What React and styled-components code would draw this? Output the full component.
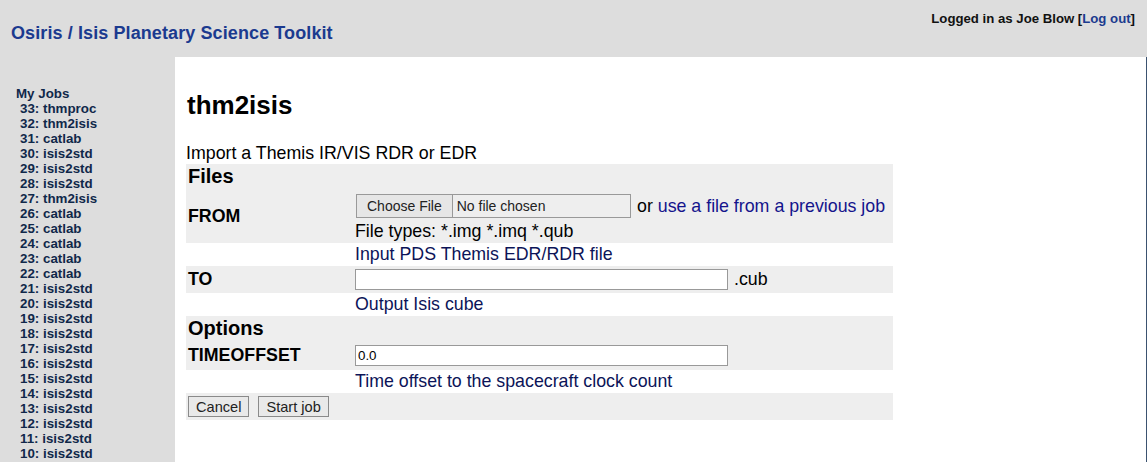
import React from 'react'
import styled, { createGlobalStyle } from 'styled-components'

const GlobalStyle = createGlobalStyle`
    html, body {
        margin: 0;
        padding: 0;
        background: #dddddd;
        font-family: "Liberation Sans", Arial, sans-serif;
    }
`

const Page = styled.div`
    display: flex;
    flex-direction: column;
    min-height: 100vh;
`

const Header = styled.header`
    display: flex;
    justify-content: space-between;
    align-items: flex-start;
    height: 57px;
    background: #dddddd;
    padding: 0 12px 0 11px;
`

const SiteTitle = styled.div`
    margin-top: 23px;
    font-size: 18px;
    font-weight: bold;
    letter-spacing: 0.1px;
    color: #1b3a8f;
`

const Login = styled.div`
    margin-top: 11px;
    font-size: 13.2px;
    font-weight: bold;
    color: #111;
`

const HeaderLink = styled.a`
    color: #1b3a8f;
    text-decoration: none;
`

const Body = styled.div`
    flex: 1;
    display: flex;
`

const Sidebar = styled.nav`
    width: 175px;
    flex-shrink: 0;
    padding-top: 29px;
    font-size: 13.33px;
    font-weight: bold;
    line-height: 15px;
    color: #10284a;
`

const SideHeading = styled.div`
    padding-left: 16px;
`

const JobItem = styled.div`
    padding-left: 20px;
`

const Main = styled.main`
    flex: 1;
    background: #ffffff;
    border-right: 1px solid #3b5270;
    padding: 0 11px;
`

const Title = styled.h1`
    margin: 33px 0 22px 1px;
    font-size: 26px;
    font-weight: bold;
    color: #000;
`

const Intro = styled.div`
    font-size: 17.8px;
    color: #000;
`

const Form = styled.div`
    width: 707px;
    font-size: 17.8px;
    color: #000;
`

const Row = styled.div`
    display: grid;
    grid-template-columns: 167px 1fr;
    align-items: center;
    background: ${p => (p.$shaded ? '#eeeeee' : 'transparent')};
    padding: ${p => p.$pad || '1px 2px'};
`

const SectionTitle = styled.div`
    grid-column: 1 / 3;
    font-size: 20px;
    font-weight: bold;
    line-height: 23px;
`

const Label = styled.div`
    font-weight: bold;
`

const Value = styled.div`
    display: flex;
    flex-direction: column;
`

const Line = styled.div`
    display: flex;
    align-items: center;
    gap: 6px;
    height: ${p => p.$height || 'auto'};
`

const Hint = styled.div`
    line-height: 20px;
`

const Desc = styled.div`
    grid-column: 2;
    line-height: 20px;
    color: #0c1458;
`

const JobLink = styled.a`
    color: #14148c;
    text-decoration: none;
`

const FileInput = styled.input`
    width: 275px;
    height: 24px;
    margin-left: 1px;
    box-sizing: border-box;
    border: 1px solid #999;
    padding: 0;
    font-family: "Liberation Sans", Arial, sans-serif;
    font-size: 14px;
    color: #222;
    background: transparent;

    &::file-selector-button {
        height: 22px;
        margin: 0 4px 0 0;
        padding: 0 10px;
        border: none;
        border-right: 1px solid #999;
        background: #e6e6e6;
        font: inherit;
        color: #222;
    }
`

const TextInput = styled.input`
    width: 373px;
    height: 21px;
    box-sizing: border-box;
    border: 1px solid #999;
    padding: 0 2px;
    font-family: "Liberation Sans", Arial, sans-serif;
    font-size: 13.33px;
    color: #000;
    background: #fff;
`

const Buttons = styled.div`
    grid-column: 1 / 3;
    display: flex;
    gap: 9px;
`

const Button = styled.button`
    height: 21px;
    padding: 0 7px;
    border: 1px solid #8a8a8a;
    background: #e9e9e9;
    font-family: "Liberation Sans", Arial, sans-serif;
    font-size: 14.6px;
    color: #222;
`

const jobs = [
    [33, 'thmproc'], [32, 'thm2isis'], [31, 'catlab'], [30, 'isis2std'],
    [29, 'isis2std'], [28, 'isis2std'], [27, 'thm2isis'], [26, 'catlab'],
    [25, 'catlab'], [24, 'catlab'], [23, 'catlab'], [22, 'catlab'],
    [21, 'isis2std'], [20, 'isis2std'], [19, 'isis2std'], [18, 'isis2std'],
    [17, 'isis2std'], [16, 'isis2std'], [15, 'isis2std'], [14, 'isis2std'],
    [13, 'isis2std'], [12, 'isis2std'], [11, 'isis2std'], [10, 'isis2std'],
]

function App() {
    return (
        <Page>
            <GlobalStyle />
            <Header>
                <SiteTitle>Osiris / Isis Planetary Science Toolkit</SiteTitle>
                <Login>
                    Logged in as Joe Blow [<HeaderLink href="#">Log out</HeaderLink>]
                </Login>
            </Header>
            <Body>
                <Sidebar>
                    <SideHeading>My Jobs</SideHeading>
                    {jobs.map(([id, name]) => (
                        <JobItem key={id}>{id}: {name}</JobItem>
                    ))}
                </Sidebar>
                <Main>
                    <Title>thm2isis</Title>
                    <Intro>Import a Themis IR/VIS RDR or EDR</Intro>
                    <Form>
                        <Row $shaded>
                            <SectionTitle>Files</SectionTitle>
                        </Row>
                        <Row $shaded $pad="2px 2px 2px">
                            <Label>FROM</Label>
                            <Value>
                                <Line $height="30px">
                                    <FileInput type="file" />
                                    <span>or <JobLink href="#">use a file from a previous job</JobLink></span>
                                </Line>
                                <Hint>File types: *.img *.imq *.qub</Hint>
                            </Value>
                        </Row>
                        <Row $pad="1px 2px 2px">
                            <Desc>Input PDS Themis EDR/RDR file</Desc>
                        </Row>
                        <Row $shaded $pad="3px 2px">
                            <Label>TO</Label>
                            <Line>
                                <TextInput type="text" />
                                <span>.cub</span>
                            </Line>
                        </Row>
                        <Row $pad="1px 2px 2px">
                            <Desc>Output Isis cube</Desc>
                        </Row>
                        <Row $shaded>
                            <SectionTitle>Options</SectionTitle>
                        </Row>
                        <Row $shaded $pad="4px 2px">
                            <Label>TIMEOFFSET</Label>
                            <Line>
                                <TextInput type="text" defaultValue="0.0" />
                            </Line>
                        </Row>
                        <Row $pad="1px 2px 2px">
                            <Desc>Time offset to the spacecraft clock count</Desc>
                        </Row>
                        <Row $shaded $pad="3px 2px">
                            <Buttons>
                                <Button>Cancel</Button>
                                <Button>Start job</Button>
                            </Buttons>
                        </Row>
                    </Form>
                </Main>
            </Body>
        </Page>
    )
}

export default App
